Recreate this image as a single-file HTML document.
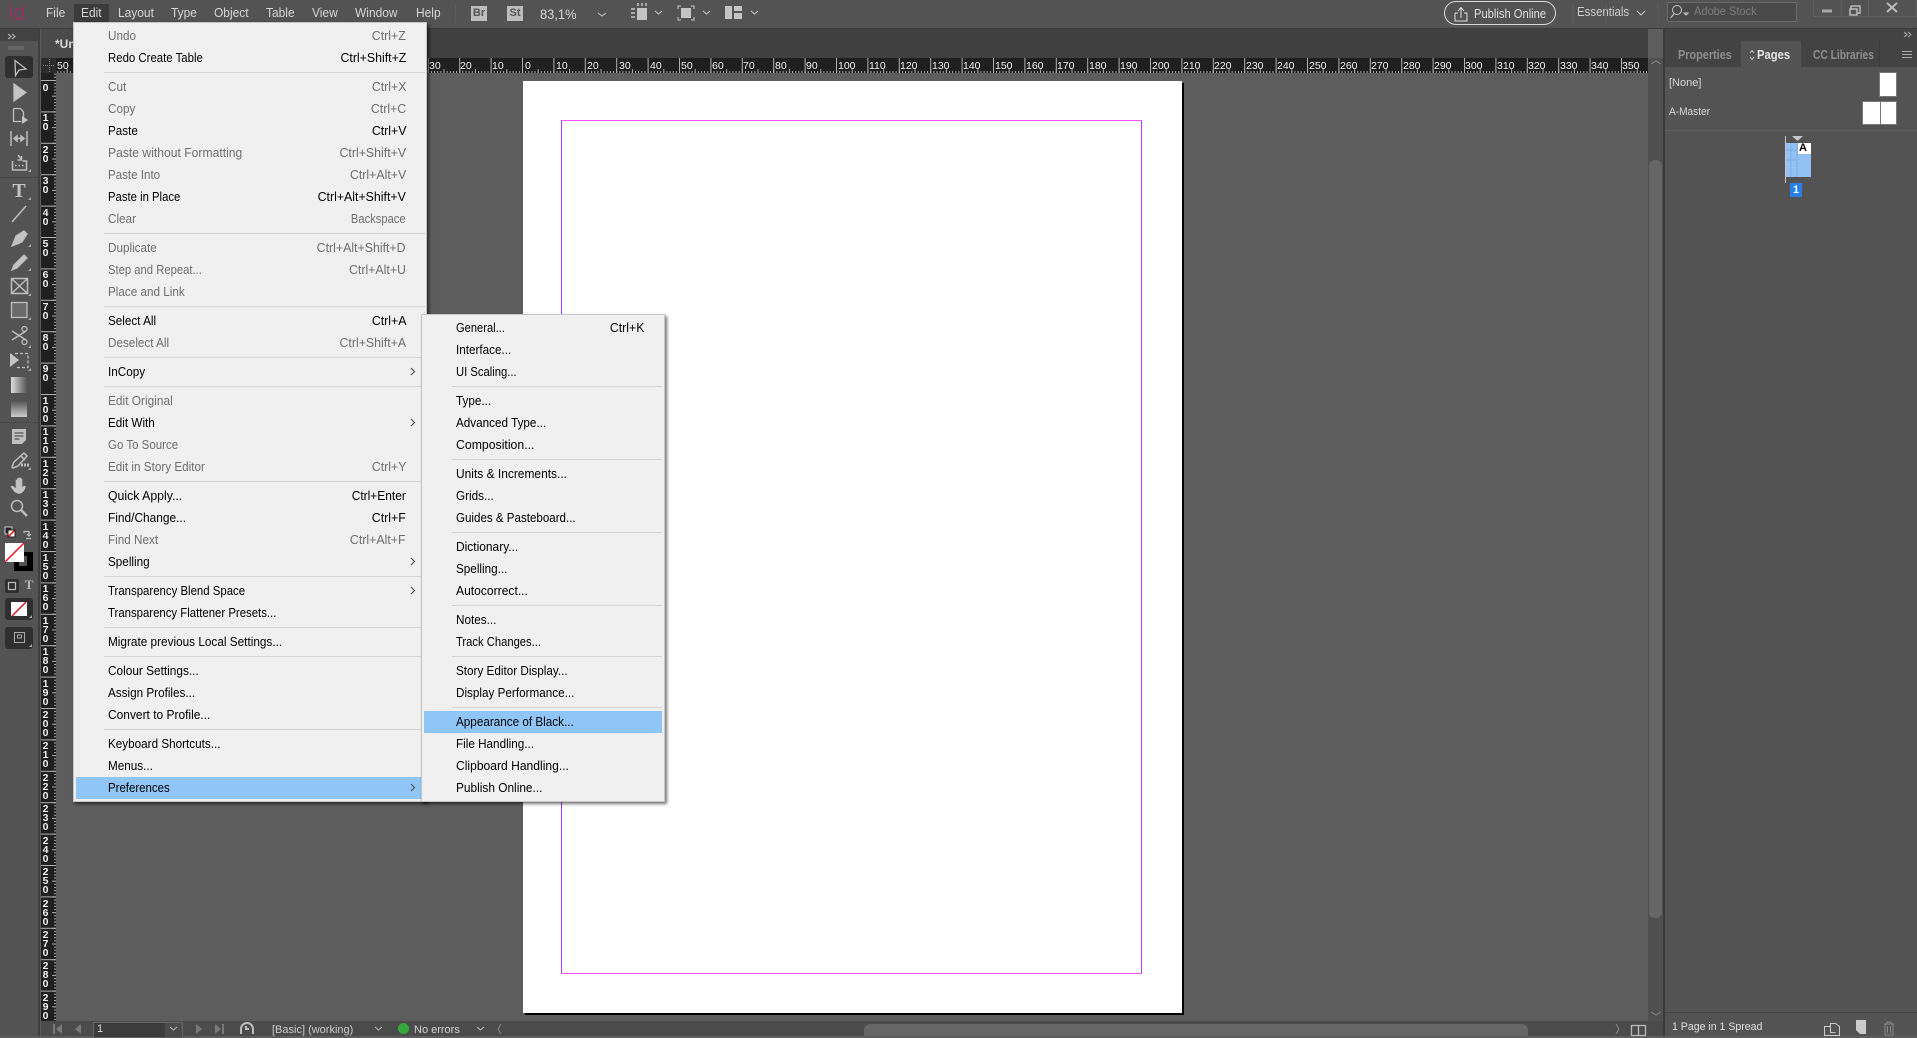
<!DOCTYPE html>
<html><head><meta charset="utf-8"><title>InDesign</title>
<style>
html,body{margin:0;padding:0;width:1917px;height:1036px;overflow:hidden;background:#5d5d5d;font-family:"Liberation Sans",sans-serif}
.a{position:absolute}
.t,.s{position:absolute;font-size:13px;line-height:22px;white-space:nowrap;color:#000;transform:scaleX(.9)}
.t{left:108px;transform-origin:0 50%}
.s{right:1511px;transform-origin:100% 50%;transform:scaleX(.95)}
.u{left:456px}
.v{right:1273px}
.d{color:#6e6e6e}
.m{position:absolute;top:3px;font-size:13px;line-height:20px;color:#d6d6d6;transform:scaleX(.92);transform-origin:0 50%;white-space:nowrap}
.sep{position:absolute;height:1px;background:#d4d4d4}
svg{position:absolute;left:0;top:0;overflow:visible}
</style></head>
<body>
<!-- top bar -->
<div class="a" style="left:0;top:0;width:1917px;height:28px;background:#535353;border-bottom:1px solid #3c3c3c"></div>
<div class="a" style="left:41px;top:29px;width:1607px;height:29px;background:#404040"></div>
<div class="a" style="left:41px;top:29px;width:33px;height:29px;background:#4a4a4a"></div>
<div class="a" style="left:55px;top:35px;font:bold 12px/18px 'Liberation Sans';color:#dcdcdc;white-space:nowrap">*Un</div>
<div class="a" style="left:8px;top:0;font-size:22px;line-height:25px;color:#8d3660;transform:scaleX(.95);transform-origin:0 50%">Id</div>
<div class="a" style="left:74px;top:4px;width:35px;height:19px;background:#3b3b3b"></div>
<div class="m" style="left:46px">File</div>
<div class="m" style="left:81px">Edit</div>
<div class="m" style="left:118px">Layout</div>
<div class="m" style="left:171px">Type</div>
<div class="m" style="left:214px">Object</div>
<div class="m" style="left:266px">Table</div>
<div class="m" style="left:312px">View</div>
<div class="m" style="left:355px">Window</div>
<div class="m" style="left:416px">Help</div>
<div class="a" style="left:471px;top:6px;width:16px;height:15px;background:#bdbdbd;color:#555;font:bold 11px/15px 'Liberation Sans';text-align:center">Br</div>
<div class="a" style="left:507px;top:6px;width:16px;height:15px;background:#bdbdbd;color:#555;font:bold 11px/15px 'Liberation Sans';text-align:center">St</div>
<div class="m" style="left:540px;top:4px;font-size:14px">83,1%</div>
<div class="m" style="left:1474px;top:4px;color:#e0e0e0;transform:scaleX(.86)">Publish Online</div>
<div class="a" style="left:1444px;top:1px;width:110px;height:22px;border:1px solid #d8d8d8;border-radius:12px"></div>
<div class="m" style="left:1577px;top:2px;color:#cfcfcf;transform:scaleX(.88)">Essentials</div>
<div class="a" style="left:1667px;top:2px;width:128px;height:18px;background:#4a4a4a;border:1px solid #6a6a6a;border-radius:2px"></div>
<div class="m" style="left:1694px;top:1px;color:#7c7c7c;font-size:12px">Adobe Stock</div>
<div class="a" style="left:1813px;top:-1px;width:102px;height:16px;border:1px solid #616161"></div>
<div class="a" style="left:1841px;top:0;width:1px;height:16px;background:#616161"></div>
<div class="a" style="left:1868px;top:0;width:1px;height:16px;background:#616161"></div>

<!-- left toolbar -->
<div class="a" style="left:0;top:29px;width:38px;height:1007px;background:#535353;border-right:2px solid #3e3e3e"></div>
<div class="a" style="left:0;top:29px;width:38px;height:12px;background:#434343"></div>
<div class="a" style="left:5px;top:56px;width:28px;height:22px;background:#2f2f2f;border-radius:3px"></div>
<div class="a" style="left:0;top:177px;width:38px;height:1px;background:#484848"></div>
<div class="a" style="left:0;top:422px;width:38px;height:1px;background:#484848"></div>
<div class="a" style="left:5px;top:598px;width:28px;height:22px;background:#2f2f2f;border-radius:3px"></div>
<div class="a" style="left:5px;top:627px;width:28px;height:22px;background:#2f2f2f;border-radius:3px"></div>
<div class="a" style="left:9px;top:181px;width:20px;font:bold 20px/20px 'Liberation Serif';color:#c4c4c4;text-align:center">T</div>
<div class="a" style="left:23px;top:577px;width:12px;font:bold 13px/15px 'Liberation Serif';color:#b8b8b8;text-align:center">T</div>

<!-- rulers -->
<svg width="1917" height="1036" viewBox="0 0 1917 1036">
<defs>
<pattern id="hs" x="522" y="58" width="3.14" height="15" patternUnits="userSpaceOnUse"><rect x="0" y="13" width="1" height="2" fill="#a8a8a8"/></pattern>
<pattern id="hm" x="522" y="58" width="15.7" height="15" patternUnits="userSpaceOnUse"><rect x="0" y="11" width="1" height="4" fill="#a8a8a8"/></pattern>
<pattern id="hl" x="522" y="58" width="31.4" height="15" patternUnits="userSpaceOnUse"><rect x="0" y="0" width="1" height="15" fill="#b0b0b0"/></pattern>
<pattern id="vs" x="41" y="80" width="15" height="3.14" patternUnits="userSpaceOnUse"><rect x="13" y="0" width="2" height="1" fill="#a8a8a8"/></pattern>
<pattern id="vm" x="41" y="80" width="15" height="15.7" patternUnits="userSpaceOnUse"><rect x="11" y="0" width="4" height="1" fill="#a8a8a8"/></pattern>
<pattern id="vl" x="41" y="80" width="15" height="31.4" patternUnits="userSpaceOnUse"><rect x="0" y="0" width="15" height="1" fill="#b0b0b0"/></pattern>
<linearGradient id="gr"><stop offset="0" stop-color="#ddd"/><stop offset="1" stop-color="#555"/></linearGradient>
<linearGradient id="gf" x2="0" y2="1"><stop offset="0" stop-color="#555"/><stop offset="1" stop-color="#ccc"/></linearGradient>
</defs>
<rect x="41" y="58" width="1607" height="15" fill="#1f1f1f"/>
<rect x="41" y="58" width="1607" height="15" fill="url(#hs)"/>
<rect x="41" y="58" width="1607" height="15" fill="url(#hm)"/>
<rect x="41" y="58" width="1607" height="15" fill="url(#hl)"/>
<rect x="41" y="73" width="15" height="948" fill="#1f1f1f"/>
<rect x="41" y="73" width="15" height="948" fill="url(#vs)"/>
<rect x="41" y="73" width="15" height="948" fill="url(#vm)"/>
<rect x="41" y="73" width="15" height="948" fill="url(#vl)"/>
<rect x="41" y="58" width="15" height="15" fill="#2b2b2b"/>
<path d="M43 65.500H54M49.500 59V72" stroke="#8a8a8a" stroke-dasharray="1 1" fill="none"/>
<g font-family="Liberation Sans" font-size="10.500" fill="#f0f0f0">
<text x="57" y="69">50</text>
<text x="429" y="69">30</text><text x="460" y="69">20</text><text x="492" y="69">10</text><text x="525" y="69">0</text><text x="556" y="69">10</text><text x="587" y="69">20</text><text x="619" y="69">30</text><text x="650" y="69">40</text><text x="681" y="69">50</text><text x="712" y="69">60</text><text x="743" y="69">70</text><text x="775" y="69">80</text><text x="806" y="69">90</text><text x="838" y="69">100</text><text x="869" y="69">110</text><text x="900" y="69">120</text><text x="932" y="69">130</text><text x="963" y="69">140</text><text x="995" y="69">150</text><text x="1026" y="69">160</text><text x="1057" y="69">170</text><text x="1089" y="69">180</text><text x="1120" y="69">190</text><text x="1152" y="69">200</text><text x="1183" y="69">210</text><text x="1214" y="69">220</text><text x="1246" y="69">230</text><text x="1277" y="69">240</text><text x="1309" y="69">250</text><text x="1340" y="69">260</text><text x="1371" y="69">270</text><text x="1403" y="69">280</text><text x="1434" y="69">290</text><text x="1465" y="69">300</text><text x="1497" y="69">310</text><text x="1528" y="69">320</text><text x="1560" y="69">330</text><text x="1591" y="69">340</text><text x="1622" y="69">350</text>
</g>
<g font-family="Liberation Sans" font-size="10.500" font-weight="bold" fill="#f0f0f0" text-anchor="middle">
<text x="45.500" y="91">0</text>
<text x="45.500" y="121">1</text><text x="45.500" y="130">0</text>
<text x="45.500" y="153">2</text><text x="45.500" y="162">0</text>
<text x="45.500" y="184">3</text><text x="45.500" y="193">0</text>
<text x="45.500" y="216">4</text><text x="45.500" y="225">0</text>
<text x="45.500" y="247">5</text><text x="45.500" y="256">0</text>
<text x="45.500" y="278">6</text><text x="45.500" y="287">0</text>
<text x="45.500" y="310">7</text><text x="45.500" y="319">0</text>
<text x="45.500" y="341">8</text><text x="45.500" y="350">0</text>
<text x="45.500" y="372">9</text><text x="45.500" y="381">0</text>
<text x="45.500" y="404">1</text><text x="45.500" y="413">0</text><text x="45.500" y="422">0</text>
<text x="45.500" y="435">1</text><text x="45.500" y="444">1</text><text x="45.500" y="453">0</text>
<text x="45.500" y="467">1</text><text x="45.500" y="476">2</text><text x="45.500" y="485">0</text>
<text x="45.500" y="498">1</text><text x="45.500" y="507">3</text><text x="45.500" y="516">0</text>
<text x="45.500" y="530">1</text><text x="45.500" y="539">4</text><text x="45.500" y="548">0</text>
<text x="45.500" y="561">1</text><text x="45.500" y="570">5</text><text x="45.500" y="579">0</text>
<text x="45.500" y="592">1</text><text x="45.500" y="601">6</text><text x="45.500" y="610">0</text>
<text x="45.500" y="624">1</text><text x="45.500" y="633">7</text><text x="45.500" y="642">0</text>
<text x="45.500" y="655">1</text><text x="45.500" y="664">8</text><text x="45.500" y="673">0</text>
<text x="45.500" y="687">1</text><text x="45.500" y="696">9</text><text x="45.500" y="705">0</text>
<text x="45.500" y="718">2</text><text x="45.500" y="727">0</text><text x="45.500" y="736">0</text>
<text x="45.500" y="749">2</text><text x="45.500" y="758">1</text><text x="45.500" y="767">0</text>
<text x="45.500" y="781">2</text><text x="45.500" y="790">2</text><text x="45.500" y="799">0</text>
<text x="45.500" y="812">2</text><text x="45.500" y="821">3</text><text x="45.500" y="830">0</text>
<text x="45.500" y="844">2</text><text x="45.500" y="853">4</text><text x="45.500" y="862">0</text>
<text x="45.500" y="875">2</text><text x="45.500" y="884">5</text><text x="45.500" y="893">0</text>
<text x="45.500" y="907">2</text><text x="45.500" y="916">6</text><text x="45.500" y="925">0</text>
<text x="45.500" y="938">2</text><text x="45.500" y="947">7</text><text x="45.500" y="956">0</text>
<text x="45.500" y="969">2</text><text x="45.500" y="978">8</text><text x="45.500" y="987">0</text>
<text x="45.500" y="1001">2</text><text x="45.500" y="1010">9</text><text x="45.500" y="1019">0</text>
</g>

<!-- page -->
<rect x="525" y="83" width="659" height="932" fill="#000"/>
<rect x="523" y="81" width="659" height="932" fill="#fff"/>
<path d="M561.500 120.500H1141.500M561.500 973.500H1141.500" stroke="#ff4fff" fill="none"/>
<path d="M561.500 120.500V973.500M1141.500 120.500V973.500" stroke="#a23cff" fill="none"/>

<!-- toolbar icons -->
<g fill="none" stroke="#bdbdbd" stroke-width="1.300">
<path d="M8 34l3 2.500-3 2.500M12 34l3 2.500-3 2.500" stroke-width="1"/>
<path d="M9 46v4M11 46v4M13 46v4M15 46v4M17 46v4M19 46v4M21 46v4M23 46v4" stroke="#777" stroke-width="1"/>
<path d="M15 60.500L26 69L19 70L15.500 75.500Z"/>
<path d="M14 84L26 92.500L14 101Z" fill="#c4c4c4"/>
<path d="M13.500 108.500h7l3 3.500v6M13.500 108.500v13h8"/>
<path d="M22 116l6 4-6 4Z" fill="#c4c4c4" stroke="none"/>
<path d="M11 131v15M27 131v15M14 138.500h10M14 138.500l3-2.500v5zM24 138.500l-3-2.500v5z" stroke-width="1.500"/>
<path d="M12.500 161v9h14v-9h-4M18 155l3.500 4.500M21.500 156v4h-4M15 165.500h1.500M18.500 165.500h1.500M22 165.500h1.500" stroke-width="1.500"/>
<path d="M12 222L26 206" stroke-width="1.500"/>
<path d="M24 231l3 3-5 8-5 2-5 2 2-5 2-5zM13 245l5-6" fill="#c4c4c4"/>
<path d="M24 255l3 3-10 10-5 2 2-5z" fill="#c4c4c4"/>
<path d="M11.500 278.500h16v15h-16zM11.500 278.500l16 15M27.500 278.500l-16 15" stroke-width="1.500"/>
<rect x="11.500" y="302.500" width="15.500" height="15" fill="#6b6b6b"/>
<path d="M12 331l14 9M12 340l14-9" stroke-width="1.500"/>
<circle cx="24.500" cy="329" r="2.500"/><circle cx="24.500" cy="342" r="2.500"/>
<path d="M10 353l9 7-9 7Z" fill="#c4c4c4" stroke="none"/>
<path d="M15 353.500h13v14H15" stroke-dasharray="3 2"/>
<rect x="11" y="377" width="16" height="16" fill="url(#gr)" stroke="none"/>
<rect x="11" y="401" width="16" height="16" fill="url(#gf)" stroke="none"/>
<path d="M12 429h14v11l-4 4H12z" fill="#c0c0c0" stroke="none"/>
<path d="M14.500 433h9M14.500 436h9M14.500 439h5" stroke="#535353"/>
<path d="M24 453l3 3-9 10-5 2-1-1 2-5zM21 456l4 4" stroke-width="1.500"/>
<path d="M21 465h9" stroke-width="3" stroke-dasharray="2 1"/>
<path d="M15 492l-4-5 1.500-1 3.500 3v-9h1.500v7v-8.500h1.500v8.500v-9h1.500v9v-8h1.500v9l2-2 1.500.500c-.500 3-3 7-7 7z" fill="#c4c4c4" stroke-width=".700"/>
<circle cx="17" cy="506" r="5.500" stroke-width="1.500"/><path d="M21 510l6 6" stroke-width="2.500"/>
<rect x="5" y="527" width="7" height="7" fill="#222" stroke="#ccc" stroke-width="1"/>
<rect x="8" y="530" width="7" height="7" fill="#fff" stroke="#222" stroke-width="1"/>
<path d="M8.500 536.500l6-6" stroke="#e00"/>
<path d="M24 533v-1.500h5v4M27 534l2 2 2-2M31 538.500h-5" stroke-width="1.200"/>
<rect x="14" y="552" width="19" height="19" fill="#000" stroke="none"/>
<rect x="19" y="556" width="8" height="10" fill="#535353" stroke="none"/>
<rect x="5" y="543" width="19" height="19" fill="#fff" stroke="none"/>
<path d="M5 562l19-19" stroke="#e8101f" stroke-width="1.500"/>
<rect x="5" y="579" width="14" height="14" fill="#2f2f2f" stroke="none" rx="2"/>
<rect x="8.500" y="582.500" width="7" height="7" stroke-width="1.200"/>
<rect x="11" y="602" width="16" height="14" fill="#fff" stroke="none"/>
<path d="M12 616l14-14" stroke="#e8101f" stroke-width="1.500"/>
<rect x="14.500" y="632.500" width="10" height="10" stroke="#aaa" stroke-width="1"/>
<rect x="17.500" y="635" width="4" height="3" stroke="#aaa" stroke-width="1"/>
</g>
<g fill="#aaa">
<path d="M31 169v3h-3zM31 197v3h-3zM31 244v3h-3zM31 268v3h-3zM31 293v3h-3zM31 317v3h-3zM31 345v3h-3zM31 368v3h-3zM31 467v3h-3zM32 615v3h-3zM32 644v3h-3z"/>
</g>

<!-- top bar icons -->
<g fill="none" stroke="#c8c8c8" stroke-width="1">
<path d="M598 13l4 3 4-3M655 11l3.500 3 3.500-3M703 11l3.500 3 3.500-3M751 11l3.500 3 3.500-3M1637 11l4 4 4-4"/>
<path d="M678 9V6h3M691 6h3v3M694 17v3h-3M681 20h-3v-3"/>
<path d="M1455 13v8h12v-8h-3M1458 13h-3M1461 18V8M1458 11l3-3.500 3 3.500" stroke="#e0e0e0"/>
<circle cx="1677" cy="10" r="4.500"/><path d="M1674 14l-3.500 4M1684 13h4l-2 2z"/>
<path d="M1822 11h10" stroke-width="3" stroke="#aaa"/>
<path d="M1851 6h9v7h-3M1851 6v3M1851 9h6v6h-7V9z" stroke="#bbb" stroke-width="1.500"/>
<path d="M1887 3l10 9M1897 3l-10 9" stroke="#bbb" stroke-width="2"/>
</g>
<rect x="637" y="8" width="10" height="12" fill="#c4c4c4"/>
<path d="M631 9h4M631 13h4M631 17h4M638 3v3M642 3v3M646 3v3" stroke="#c4c4c4" fill="none" stroke-width="1.500"/>
<rect x="681" y="8" width="10" height="10" fill="#c4c4c4"/>
<path d="M725 6h7v13h-7zM734 6h8v5h-8zM734 13h8v6h-8z" fill="#c4c4c4"/>
<g stroke="#555" fill="none"><path d="M1573 2v22M1658 2v22" stroke="#5f5f5f"/></g>
<path d="M455.500 5v18M1606 4v20" stroke="#5d5d5d"/>
</svg>

<!-- scrollbars + right panel -->
<div class="a" style="left:1648px;top:58px;width:15px;height:963px;background:#4f4f4f"></div>
<div class="a" style="left:1649px;top:160px;width:13px;height:758px;background:#666;border-radius:6px"></div>
<div class="a" style="left:1663px;top:29px;width:254px;height:1007px;background:#535353;border-left:2px solid #3a3a3a;box-sizing:border-box"></div>
<div class="a" style="left:1665px;top:29px;width:252px;height:12px;background:#434343"></div>
<div class="a" style="left:1665px;top:41px;width:252px;height:26px;background:#434343"></div>
<div class="a" style="left:1741px;top:41px;width:60px;height:27px;background:#535353"></div>
<div class="a" style="left:1879px;top:41px;width:1px;height:26px;background:#3a3a3a"></div>
<div class="a" style="left:1678px;top:45px;font-size:12.500px;line-height:20px;font-weight:bold;color:#8e8e8e;transform:scaleX(.87);transform-origin:0 50%">Properties</div>
<div class="a" style="left:1757px;top:45px;font-size:12.500px;line-height:20px;font-weight:bold;color:#e4e4e4;transform:scaleX(.9);transform-origin:0 50%">Pages</div>
<div class="a" style="left:1813px;top:45px;font-size:12.500px;line-height:20px;font-weight:bold;color:#8e8e8e;transform:scaleX(.82);transform-origin:0 50%;white-space:nowrap">CC Libraries</div>
<div class="a" style="left:1669px;top:73px;font-size:11px;line-height:20px;color:#d8d8d8">[None]</div>
<div class="a" style="left:1669px;top:102px;font-size:11px;line-height:20px;color:#d8d8d8;transform:scaleX(.92);transform-origin:0 50%">A-Master</div>
<div class="a" style="left:1879px;top:72px;width:16px;height:23px;background:#fff;border:1px solid #777"></div>
<div class="a" style="left:1862px;top:101px;width:17px;height:22px;background:#fff;border:1px solid #777"></div>
<div class="a" style="left:1880px;top:101px;width:15px;height:22px;background:#fff;border:1px solid #777"></div>
<div class="a" style="left:1665px;top:130px;width:252px;height:1px;background:#5f5f5f"></div>
<div class="a" style="left:1785px;top:136px;width:1px;height:47px;background:#c8c8c8"></div>
<div class="a" style="left:1786px;top:143px;width:25px;height:34px;background:#93c1f4"></div>
<div class="a" style="left:1798px;top:143px;width:13px;height:11px;background:#fff;color:#000;font:bold 11px/11px 'Liberation Sans';text-align:left;text-indent:1px">A</div>
<div class="a" style="left:1790px;top:183px;width:12px;height:14px;background:#2680e8;color:#fff;font:bold 11px/14px 'Liberation Sans';text-align:center">1</div>
<div class="a" style="left:1665px;top:1012px;width:252px;height:1px;background:#474747"></div>
<div class="a" style="left:1672px;top:1018px;font-size:11px;line-height:18px;color:#e0e0e0;white-space:nowrap;transform:scaleX(.96);transform-origin:0 50%">1 Page in 1 Spread</div>

<!-- bottom bar -->
<div class="a" style="left:41px;top:1021px;width:1622px;height:15px;background:#4b4b4b"></div>
<div class="a" style="left:864px;top:1024px;width:664px;height:12px;background:#666;border-radius:6px 6px 0 0"></div>
<div class="a" style="left:93px;top:1022px;width:71px;height:14px;background:#3c3c3c;border:1px solid #666;border-bottom:0"></div>
<div class="a" style="left:165px;top:1022px;width:17px;height:14px;background:#4b4b4b;border:1px solid #666;border-left:0;border-bottom:0"></div>
<div class="a" style="left:97px;top:1022px;font-size:11px;line-height:14px;color:#ddd">1</div>
<div class="a" style="left:272px;top:1022px;font-size:11px;line-height:16px;color:#ccc;white-space:nowrap">[Basic] (working)</div>
<div class="a" style="left:398px;top:1023px;width:11px;height:11px;background:#36a83d;border-radius:50%"></div>
<div class="a" style="left:414px;top:1022px;font-size:11px;line-height:16px;color:#d4d4d4;white-space:nowrap">No errors</div>
<svg width="1917" height="1036" viewBox="0 0 1917 1036">
<g fill="#7a7a7a" stroke="none">
<path d="M53 1024h2v10h-2zM62 1024v10l-6-5zM81 1024v10l-6-5zM196 1024v10l6-5zM215 1024v10l6-5zM222 1024h2v10h-2z"/>
</g>
<g fill="none" stroke="#bdbdbd">
<path d="M170 1027l3.500 3 3.500-3M375 1027l3.500 3 3.500-3M477 1027l3.500 3 3.500-3"/>
<path d="M241 1034v-5a6 6 0 0 1 12 0v5M246 1026v3h3" stroke-width="2"/>
<path d="M501 1024l-3 5 3 5M1616 1024l3 5-3 5" stroke="#888"/>
<path d="M1631.500 1025.500h14v10h-14zM1638.500 1025.500v10" stroke="#bbb" stroke-width="1.300"/>
<path d="M1651 64l5-3 5 3M1651 1012l5 3 5-3" stroke="#888"/>
<path d="M1824.500 1026.500h6v-3h5l4 3v9h-15zM1830.500 1026.500v6h5" stroke="#ccc"/>
<path d="M1856 1020h10v14h-6l-4-4z" fill="#ccc" stroke="none"/>
<path d="M1884 1024h10M1887 1024v-2h4v2M1885 1024v11h8v-11M1887.500 1026v7M1890.500 1026v7" stroke="#888"/>
<path d="M1902 51.500h10M1902 54.500h10M1902 57.500h10" stroke="#aaa"/>
<path d="M1750 53l2-2.500 2 2.500M1750 57l2 2.500 2-2.500" stroke="#ccc"/>
<path d="M1904 32l3 2.500-3 2.500M1908 32l3 2.500-3 2.500" stroke="#aaa"/>
</g>
<path d="M1792 136h11l-5.500 5z" fill="#c8c8c8"/>
<path d="M1791 143v34M1797 143v34M1786 150h12M1786 160h12" stroke="#78a8dc" fill="none" stroke-width=".800"/>
</svg>

<!-- Edit menu -->
<div class="a" style="left:73px;top:22px;width:352px;height:778px;background:#f0f0f0;border:1px solid #c6c6c6;box-shadow:2px 2px 3px rgba(0,0,0,.55)"></div>
<div class="sep" style="left:104px;top:72px;width:321px"></div>
<div class="sep" style="left:104px;top:233px;width:321px"></div>
<div class="sep" style="left:104px;top:306px;width:321px"></div>
<div class="sep" style="left:104px;top:357px;width:321px"></div>
<div class="sep" style="left:104px;top:386px;width:321px"></div>
<div class="sep" style="left:104px;top:481px;width:321px"></div>
<div class="sep" style="left:104px;top:576px;width:321px"></div>
<div class="sep" style="left:104px;top:627px;width:321px"></div>
<div class="sep" style="left:104px;top:656px;width:321px"></div>
<div class="sep" style="left:104px;top:729px;width:321px"></div>
<div class="a" style="left:76px;top:777px;width:346px;height:22px;background:#8fc6f7"></div>

<div class="t d" style="top:25px">Undo</div><div class="s d" style="top:25px">Ctrl+Z</div>
<div class="t" style="top:47px;transform:scaleX(.877)">Redo Create Table</div><div class="s" style="top:47px">Ctrl+Shift+Z</div>
<div class="t d" style="top:76px">Cut</div><div class="s d" style="top:76px">Ctrl+X</div>
<div class="t d" style="top:98px">Copy</div><div class="s d" style="top:98px">Ctrl+C</div>
<div class="t" style="top:120px">Paste</div><div class="s" style="top:120px">Ctrl+V</div>
<div class="t d" style="top:142px;transform:scaleX(.934)">Paste without Formatting</div><div class="s d" style="top:142px">Ctrl+Shift+V</div>
<div class="t d" style="top:164px;transform:scaleX(.89)">Paste Into</div><div class="s d" style="top:164px">Ctrl+Alt+V</div>
<div class="t" style="top:186px;transform:scaleX(.87)">Paste in Place</div><div class="s" style="top:186px">Ctrl+Alt+Shift+V</div>
<div class="t d" style="top:208px">Clear</div><div class="s d" style="top:208px;transform:scaleX(.86)">Backspace</div>
<div class="t d" style="top:237px">Duplicate</div><div class="s d" style="top:237px">Ctrl+Alt+Shift+D</div>
<div class="t d" style="top:259px;transform:scaleX(.866)">Step and Repeat...</div><div class="s d" style="top:259px">Ctrl+Alt+U</div>
<div class="t d" style="top:281px">Place and Link</div>
<div class="t" style="top:310px">Select All</div><div class="s" style="top:310px">Ctrl+A</div>
<div class="t d" style="top:332px">Deselect All</div><div class="s d" style="top:332px">Ctrl+Shift+A</div>
<div class="t" style="top:361px">InCopy</div>
<div class="t d" style="top:390px;transform:scaleX(.915)">Edit Original</div>
<div class="t" style="top:412px">Edit With</div>
<div class="t d" style="top:434px;transform:scaleX(.885)">Go To Source</div>
<div class="t d" style="top:456px">Edit in Story Editor</div><div class="s d" style="top:456px">Ctrl+Y</div>
<div class="t" style="top:485px;transform:scaleX(.945)">Quick Apply...</div><div class="s" style="top:485px;transform:scaleX(.92)">Ctrl+Enter</div>
<div class="t" style="top:507px;transform:scaleX(.915)">Find/Change...</div><div class="s" style="top:507px">Ctrl+F</div>
<div class="t d" style="top:529px">Find Next</div><div class="s d" style="top:529px">Ctrl+Alt+F</div>
<div class="t" style="top:551px">Spelling</div>
<div class="t" style="top:580px;transform:scaleX(.877)">Transparency Blend Space</div>
<div class="t" style="top:602px;transform:scaleX(.875)">Transparency Flattener Presets...</div>
<div class="t" style="top:631px;transform:scaleX(.906)">Migrate previous Local Settings...</div>
<div class="t" style="top:660px;transform:scaleX(.91)">Colour Settings...</div>
<div class="t" style="top:682px">Assign Profiles...</div>
<div class="t" style="top:704px;transform:scaleX(.92)">Convert to Profile...</div>
<div class="t" style="top:733px">Keyboard Shortcuts...</div>
<div class="t" style="top:755px">Menus...</div>
<div class="t" style="top:777px;transform:scaleX(.88)">Preferences</div>

<!-- Preferences submenu -->
<div class="a" style="left:421px;top:314px;width:242px;height:486px;background:#f0f0f0;border:1px solid #c6c6c6;box-shadow:2px 2px 3px rgba(0,0,0,.55)"></div>
<div class="sep" style="left:452px;top:386px;width:210px"></div>
<div class="sep" style="left:452px;top:459px;width:210px"></div>
<div class="sep" style="left:452px;top:532px;width:210px"></div>
<div class="sep" style="left:452px;top:605px;width:210px"></div>
<div class="sep" style="left:452px;top:656px;width:210px"></div>
<div class="sep" style="left:452px;top:707px;width:210px"></div>
<div class="a" style="left:424px;top:711px;width:238px;height:22px;background:#8fc6f7"></div>
<div class="t u" style="top:317px;transform:scaleX(.857)">General...</div><div class="s v" style="top:317px">Ctrl+K</div>
<div class="t u" style="top:339px">Interface...</div>
<div class="t u" style="top:361px;transform:scaleX(.865)">UI Scaling...</div>
<div class="t u" style="top:390px">Type...</div>
<div class="t u" style="top:412px">Advanced Type...</div>
<div class="t u" style="top:434px;transform:scaleX(.944)">Composition...</div>
<div class="t u" style="top:463px;transform:scaleX(.92)">Units &amp; Increments...</div>
<div class="t u" style="top:485px">Grids...</div>
<div class="t u" style="top:507px;transform:scaleX(.89)">Guides &amp; Pasteboard...</div>
<div class="t u" style="top:536px;transform:scaleX(.92)">Dictionary...</div>
<div class="t u" style="top:558px">Spelling...</div>
<div class="t u" style="top:580px;transform:scaleX(.93)">Autocorrect...</div>
<div class="t u" style="top:609px">Notes...</div>
<div class="t u" style="top:631px;transform:scaleX(.863)">Track Changes...</div>
<div class="t u" style="top:660px">Story Editor Display...</div>
<div class="t u" style="top:682px">Display Performance...</div>
<div class="t u" style="top:711px">Appearance of Black...</div>
<div class="t u" style="top:733px">File Handling...</div>
<div class="t u" style="top:755px;transform:scaleX(.93)">Clipboard Handling...</div>
<div class="t u" style="top:777px;transform:scaleX(.913)">Publish Online...</div>
<svg width="1917" height="1036" viewBox="0 0 1917 1036">
<path d="M411 368l3.500 3.500-3.500 3.500M411 419l3.500 3.500-3.500 3.500M411 558l3.500 3.500-3.500 3.500M411 587l3.500 3.500-3.500 3.500M411 784l3.500 3.500-3.500 3.500" fill="none" stroke="#555" stroke-width="1.200"/>
</svg>
</body></html>
